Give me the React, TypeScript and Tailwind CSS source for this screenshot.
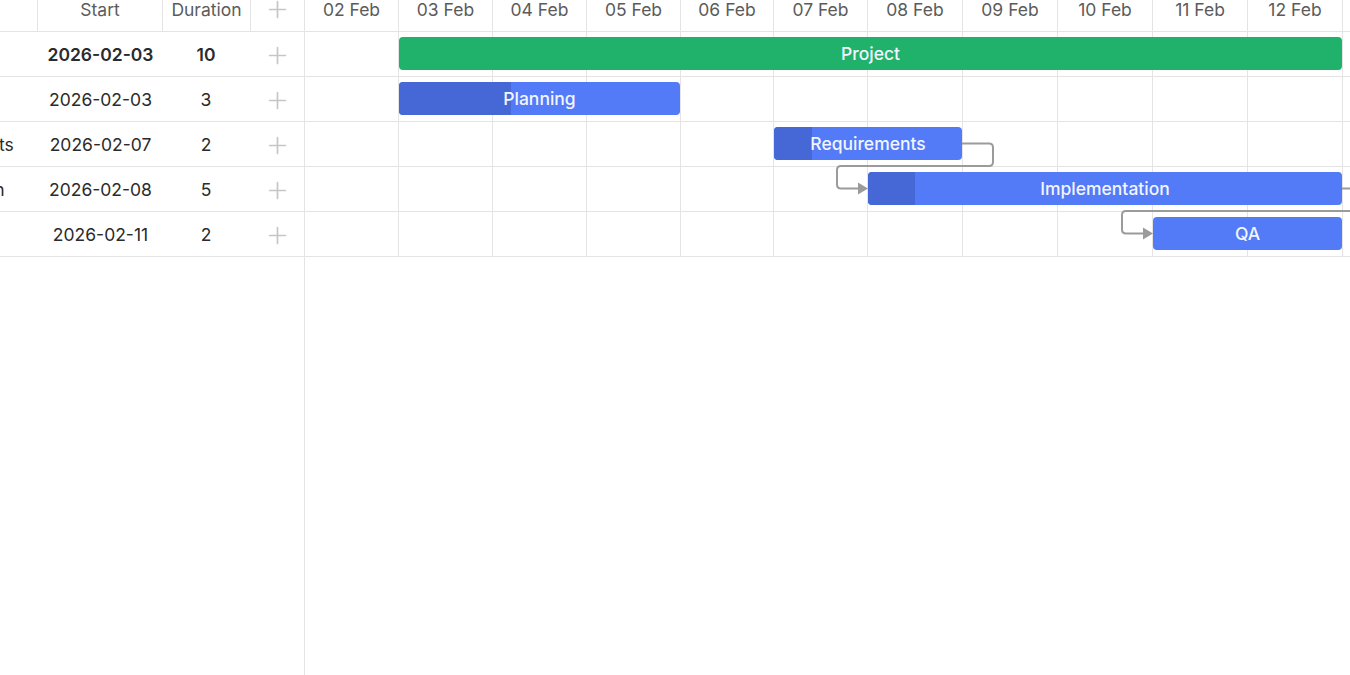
import { Plus } from 'lucide-react';

type Task = {
  id: number;
  name: string;
  start: string;
  day: number;
  duration: number;
  progress: number;
  summary?: boolean;
  indent: number;
};

const ROW_H = 45;
const BAR_TOP = 5;
const BAR_H = 33;

const days = ['02 Feb', '03 Feb', '04 Feb', '05 Feb', '06 Feb', '07 Feb', '08 Feb', '09 Feb', '10 Feb', '11 Feb', '12 Feb', '13 Feb', '14 Feb'];

// left edge of every day column in the timeline, in px
const edges = [0, 94, 188, 282, 376, 469, 563, 658, 753, 848, 943, 1038, 1133, 1228];

const tasks: Task[] = [
  { id: 1, name: 'Project', start: '2026-02-03', day: 1, duration: 10, progress: 0, summary: true, indent: 40 },
  { id: 2, name: 'Planning', start: '2026-02-03', day: 1, duration: 3, progress: 40, indent: 64 },
  { id: 3, name: 'Requirements', start: '2026-02-07', day: 5, duration: 2, progress: 20, indent: 64 },
  { id: 4, name: 'Implementation', start: '2026-02-08', day: 6, duration: 5, progress: 10, indent: 41 },
  { id: 5, name: 'QA', start: '2026-02-11', day: 9, duration: 2, progress: 0, indent: 64 },
];

const links = [
  { from: 3, to: 4 },
  { from: 4, to: 5 },
];

function barBox(t: Task, row: number) {
  const left = edges[t.day];
  const width = edges[t.day + t.duration] - left - 1;
  const top = row * ROW_H + BAR_TOP;
  return { left, width, top, mid: top + BAR_H / 2 };
}

// orthogonal polyline with softened corners
function roundedPath(pts: [number, number][], r = 4) {
  let d = `M${pts[0][0]},${pts[0][1]}`;
  for (let i = 1; i < pts.length - 1; i++) {
    const [px, py] = pts[i - 1];
    const [x, y] = pts[i];
    const [nx, ny] = pts[i + 1];
    const inX = Math.sign(x - px), inY = Math.sign(y - py);
    const outX = Math.sign(nx - x), outY = Math.sign(ny - y);
    d += ` L${x - inX * r},${y - inY * r} Q${x},${y} ${x + outX * r},${y + outY * r}`;
  }
  const last = pts[pts.length - 1];
  d += ` L${last[0]},${last[1]}`;
  return d;
}

function LinkLayer() {
  return (
    <svg className="absolute left-0 top-0 pointer-events-none" width={edges[edges.length - 1] + 60} height={tasks.length * ROW_H} fill="none">
      {links.map((l) => {
        const ai = tasks.findIndex((t) => t.id === l.from);
        const bi = tasks.findIndex((t) => t.id === l.to);
        const a = barBox(tasks[ai], ai);
        const b = barBox(tasks[bi], bi);
        const ax = a.left + a.width;
        const lineY = bi * ROW_H - 1;
        const pts: [number, number][] = [
          [ax, a.mid],
          [ax + 31, a.mid],
          [ax + 31, lineY],
          [b.left - 31, lineY],
          [b.left - 31, b.mid],
          [b.left - 9, b.mid],
        ];
        return (
          <g key={`${l.from}-${l.to}`}>
            <path d={roundedPath(pts)} stroke="#9b9b9b" strokeWidth={2} />
            <path d={`M${b.left - 10},${b.mid - 6} L${b.left},${b.mid} L${b.left - 10},${b.mid + 6} Z`} fill="#9b9b9b" />
          </g>
        );
      })}
    </svg>
  );
}

function AddIcon() {
  return <Plus size={27} strokeWidth={1.5} className="text-[#c6c6c6]" />;
}

function GridPanel() {
  return (
    <div className="w-[305px] shrink-0 border-r border-[#e4e4e4] overflow-hidden h-full">
      <div className="ml-[-164px] w-[468px]">
        <div className="flex h-[32px] border-b border-[#e4e4e4] text-[#5b5b5b]">
          <div className="w-[202px] border-r border-[#e4e4e4]" />
          <div className="w-[125px] border-r border-[#e4e4e4] flex justify-center leading-[20px]">Start</div>
          <div className="w-[88px] border-r border-[#e4e4e4] flex justify-center leading-[20px]">Duration</div>
          <div className="w-[53px] flex justify-center mt-[-4px]">
            <AddIcon />
          </div>
        </div>
        {tasks.map((t) => (
          <div
            key={t.id}
            className={`flex h-[45px] items-center pt-[2px] border-b border-[#e4e4e4] text-[#2b2b2b] ${t.summary ? 'font-semibold' : ''}`}
          >
            <div className="w-[202px] whitespace-nowrap overflow-hidden font-normal" style={{ paddingLeft: t.indent }}>
              {t.name}
            </div>
            <div className="w-[125px] text-center">{t.start}</div>
            <div className="w-[88px] text-center pr-[2px]">{t.duration}</div>
            <div className="w-[53px] flex justify-center">
              <AddIcon />
            </div>
          </div>
        ))}
      </div>
    </div>
  );
}

function DayCells({ labels }: { labels?: boolean }) {
  return (
    <>
      {days.map((d, i) => (
        <div
          key={d}
          className="shrink-0 border-r border-[#e4e4e4] flex justify-center leading-[20px] text-[#5b5b5b]"
          style={{ width: edges[i + 1] - edges[i] }}
        >
          {labels ? d : null}
        </div>
      ))}
    </>
  );
}

function Chart() {
  return (
    <div className="flex-1 min-w-0 overflow-hidden">
      <div className="flex h-[32px] border-b border-[#e4e4e4] w-max">
        <DayCells labels />
      </div>
      <div className="relative w-max">
        {tasks.map((t, i) => {
          const b = barBox(t, i);
          return (
            <div key={t.id} className="relative flex h-[45px] border-b border-[#e4e4e4]">
              <DayCells />
              <div
                className={`absolute top-[5px] h-[33px] rounded-[4px] overflow-hidden flex items-center justify-center ${t.summary ? 'bg-[#20b26b]' : 'bg-[#537bf7]'}`}
                style={{ left: b.left, width: b.width }}
              >
                {t.progress > 0 && (
                  <div className="absolute left-0 top-0 bottom-0 bg-[#4668d6]" style={{ width: `${t.progress}%` }} />
                )}
                <span className="relative text-[#f2f5ff] font-medium whitespace-nowrap pt-[1px]">{t.name}</span>
              </div>
            </div>
          );
        })}
        <LinkLayer />
      </div>
    </div>
  );
}

export default function App() {
  return (
    <div className="w-[1350px] h-[675px] overflow-hidden bg-white flex text-[17.5px] font-['Inter',sans-serif]">
      <GridPanel />
      <Chart />
    </div>
  );
}
